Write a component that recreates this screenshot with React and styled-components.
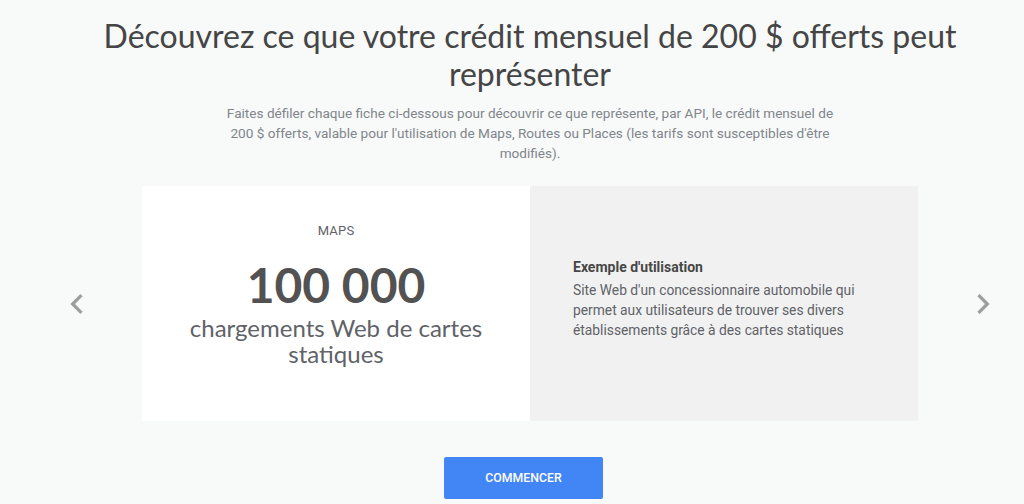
import React from "react";
import styled, { createGlobalStyle } from "styled-components";

const GlobalStyle = createGlobalStyle`
  html, body { margin: 0; padding: 0; }
  body {
    background: #f8f9f9;
    font-family: Roboto, "Liberation Sans", Arial, sans-serif;
    -webkit-font-smoothing: antialiased;
  }
`;

const Page = styled.main`
  display: flex;
  flex-direction: column;
  align-items: center;
  padding: 17px 0 0 36px;
`;

const Title = styled.h1`
  margin: 0;
  max-width: 900px;
  font-family: Lato, "Open Sans", sans-serif;
  font-weight: 400;
  font-size: 32px;
  line-height: 38px;
  color: #454545;
  text-align: center;
`;

const Lead = styled.p`
  margin: 10px 0 0;
  max-width: 624px;
  font-family: Roboto, sans-serif;
  font-size: 13.6px;
  line-height: 20px;
  color: #80868b;
  text-align: center;
`;

const Carousel = styled.section`
  display: flex;
  align-items: center;
  gap: 45px;
  margin-top: 23px;
`;

const Arrow = styled.button`
  width: 40px;
  height: 40px;
  padding: 0;
  border: none;
  background: none;
  color: #9e9e9e;
  cursor: pointer;
  display: flex;
  align-items: center;
  justify-content: center;
  svg { display: block; }
`;

const Card = styled.div`
  display: grid;
  grid-template-columns: 388px 388px;
  height: 235px;
`;

const Stat = styled.div`
  background: #ffffff;
  padding: 35px 20px 0;
  text-align: center;
  display: flex;
  flex-direction: column;
  align-items: center;
`;

const Product = styled.div`
  font-family: Roboto, sans-serif;
  font-size: 13px;
  line-height: 20px;
  color: #5f6368;
  letter-spacing: 0.2px;
`;

const Amount = styled.div`
  margin-top: 16px;
  font-family: Lato, sans-serif;
  font-weight: 700;
  font-size: 48px;
  line-height: 56px;
  color: #525252;
`;

const Unit = styled.div`
  margin-top: 2px;
  max-width: 330px;
  font-family: Lato, sans-serif;
  font-size: 24px;
  line-height: 26px;
  color: #5f6368;
`;

const Example = styled.div`
  background: #f1f1f1;
  padding: 0 43px 11px;
  display: flex;
  flex-direction: column;
  justify-content: center;
`;

const ExampleTitle = styled.h3`
  margin: 0;
  font-family: Roboto, sans-serif;
  font-weight: 700;
  font-size: 14px;
  line-height: 20px;
  color: #474747;
`;

const ExampleText = styled.p`
  margin: 3px 0 0;
  font-family: Roboto, sans-serif;
  font-size: 13.8px;
  line-height: 20px;
  color: #5f6368;
`;

const Actions = styled.div`
  display: flex;
  justify-content: center;
  margin-top: 36px;
`;

const StartButton = styled.button`
  width: 159px;
  height: 42px;
  margin-right: 13px;
  border: none;
  border-radius: 2px;
  background: #4285f4;
  color: #ffffff;
  font-family: Roboto, sans-serif;
  font-weight: 500;
  font-size: 12.3px;
  letter-spacing: 0;
  cursor: pointer;
`;

const ChevronLeft = () => (
  <svg width="40" height="40" viewBox="0 0 24 24" fill="currentColor" aria-hidden="true">
    <path d="M15.41 7.41L14 6l-6 6 6 6 1.41-1.41L10.83 12z" />
  </svg>
);

const ChevronRight = () => (
  <svg width="40" height="40" viewBox="0 0 24 24" fill="currentColor" aria-hidden="true">
    <path d="M10 6L8.59 7.41 13.17 12l-4.58 4.59L10 18l6-6z" />
  </svg>
);

export default function App() {
  return (
    <>
      <GlobalStyle />
      <Page>
        <Title>
          Découvrez ce que votre crédit mensuel de 200 $ offerts peut représenter
        </Title>
        <Lead>
          Faites défiler chaque fiche ci-dessous pour découvrir ce que représente, par API, le
          crédit mensuel de 200 $ offerts, valable pour l'utilisation de Maps, Routes ou Places
          (les tarifs sont susceptibles d'être modifiés).
        </Lead>
        <Carousel>
          <Arrow aria-label="Précédent">
            <ChevronLeft />
          </Arrow>
          <Card>
            <Stat>
              <Product>MAPS</Product>
              <Amount>100 000</Amount>
              <Unit>chargements Web de cartes statiques</Unit>
            </Stat>
            <Example>
              <ExampleTitle>Exemple d'utilisation</ExampleTitle>
              <ExampleText>
                Site Web d'un concessionnaire automobile qui permet aux utilisateurs de trouver
                ses divers établissements grâce à des cartes statiques
              </ExampleText>
            </Example>
          </Card>
          <Arrow aria-label="Suivant">
            <ChevronRight />
          </Arrow>
        </Carousel>
        <Actions>
          <StartButton>COMMENCER</StartButton>
        </Actions>
      </Page>
    </>
  );
}
